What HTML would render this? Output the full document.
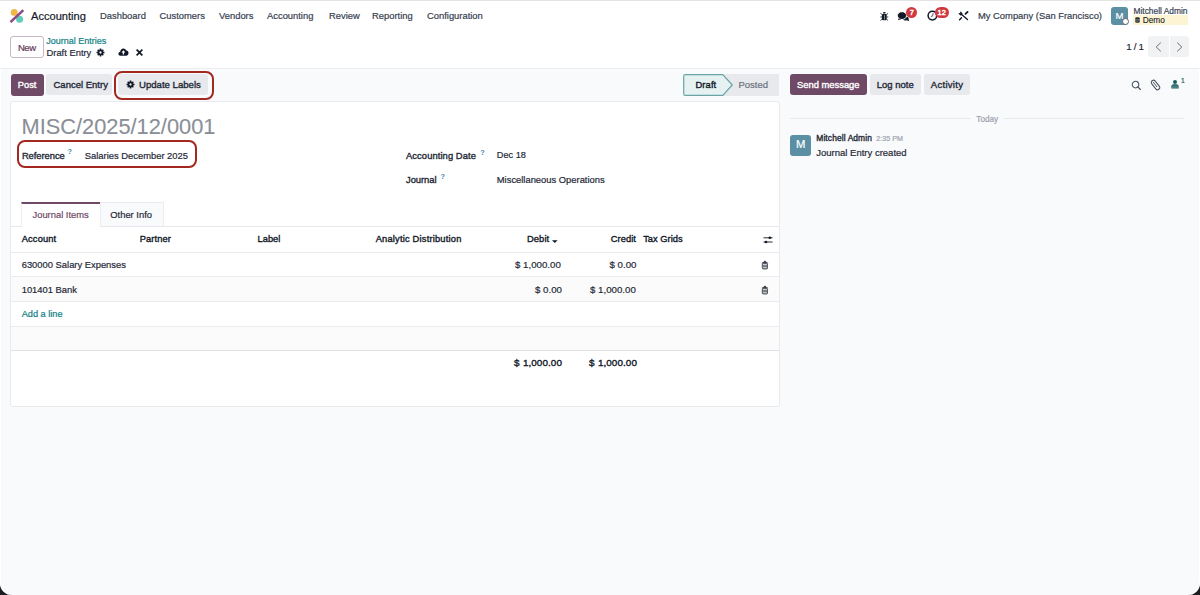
<!DOCTYPE html>
<html><head><meta charset="utf-8">
<style>
*{box-sizing:border-box;margin:0;padding:0}
html,body{width:1200px;height:595px;overflow:hidden;background:#1b1d21}
body{font-family:"Liberation Sans",sans-serif;color:#374151;position:relative}
#win{position:absolute;left:0;top:0;width:1200px;height:595px;background:#f9fafb;border-radius:0 0 12px 12px;overflow:hidden;box-shadow:inset 1px 0 0 #fff,inset -1px 0 0 #fff}
.a{position:absolute}
.t{position:absolute;white-space:nowrap;line-height:1;-webkit-text-stroke:0.2px currentColor}
.b{font-weight:bold;-webkit-text-stroke:0}
.sb{-webkit-text-stroke:0.36px currentColor}
#topstrip{left:0;top:0;width:1200px;height:1px;background:#e3e3e3}
#nav{left:0;top:1px;width:1200px;height:31px;background:#fff}
#cp{left:0;top:32px;width:1200px;height:37px;background:#fff;border-bottom:1px solid #eceef1}
.nav{font-size:9.4px;color:#374151}
.btn{position:absolute;border-radius:3px;background:#e7e9ed}
.sheet{position:absolute;left:10px;top:101px;width:770px;height:306px;background:#fff;border:1px solid #e8eaed;border-radius:3px}
.hline{position:absolute;height:1px;background:#e9ebee}
.redbox{position:absolute;border:2px solid #a3281f;border-radius:8px}
</style></head>
<body>
<div id="win">
<div class="a" id="topstrip"></div>
<div class="a" id="nav"></div>
<div class="a" id="cp"></div>

<!-- logo -->
<svg class="a" style="left:9px;top:8px" width="16" height="16" viewBox="0 0 16 16">
  <circle cx="5.2" cy="4.4" r="3.45" fill="#f0b849"/>
  <circle cx="10.6" cy="11.3" r="3.5" fill="#5ecdb9"/>
  <line x1="1.5" y1="14.1" x2="14.3" y2="2.1" stroke="#8d4b82" stroke-width="2.6" stroke-linecap="butt"/>
</svg>
<span class="t" style="left:31px;top:11px;font-size:11.1px;color:#111827">Accounting</span>
<span class="t nav" style="left:100px;top:11px">Dashboard</span>
<span class="t nav" style="left:159.5px;top:11px">Customers</span>
<span class="t nav" style="left:219px;top:11px">Vendors</span>
<span class="t nav" style="left:267px;top:11px">Accounting</span>
<span class="t nav" style="left:329px;top:11px">Review</span>
<span class="t nav" style="left:372px;top:11px">Reporting</span>
<span class="t nav" style="left:427px;top:11px">Configuration</span>

<!-- systray -->
<span class="t nav" style="left:978px;top:11px">My Company (San Francisco)</span>
<div class="a" style="left:1111px;top:7px;width:17.2px;height:17.5px;border-radius:3px;background:#5b8fa3"></div>
<span class="t" style="left:1115.5px;top:11.3px;font-size:9.6px;color:#fff">M</span>
<div class="a" style="left:1121.5px;top:17.6px;width:7.2px;height:7.2px;border-radius:50%;background:#fff;border:1.2px solid #5f6672"></div>
<span class="t" style="left:1133.5px;top:7px;font-size:8.4px;color:#374151">Mitchell Admin</span>
<div class="a" style="left:1133px;top:15px;width:55px;height:10px;background:#fdf4d3"></div>
<span class="t" style="left:1142.7px;top:16.2px;font-size:8.3px;color:#111827;-webkit-text-stroke:0.1px #111827">Demo</span>
<svg class="a" style="left:1134.8px;top:16.8px" width="5" height="6" viewBox="0 0 5 6"><path d="M0.2 1 C0.2 0 4.8 0 4.8 1 V5 C4.8 6 0.2 6 0.2 5 Z" fill="#2b2f36"/><path d="M0.2 2.2 C1.5 2.8 3.5 2.8 4.8 2.2 M0.2 3.6 C1.5 4.2 3.5 4.2 4.8 3.6" stroke="#fdf4d3" stroke-width="0.35" fill="none"/></svg>

<!-- breadcrumbs -->
<div class="a" style="left:10px;top:36px;width:34px;height:22px;border:1px solid #c9b6c4;border-radius:3px;background:#fff"></div>
<span class="t" style="left:18px;top:43.1px;font-size:9.5px;letter-spacing:-0.5px;color:#5f3b57">New</span>
<span class="t" style="left:46.3px;top:37.4px;font-size:9px;color:#0f7e83">Journal Entries</span>
<span class="t" style="left:46.5px;top:47.8px;font-size:9.4px;color:#1f2937">Draft Entry</span>

<!-- pager -->
<span class="t" style="left:1126.3px;top:41.8px;font-size:9.8px;color:#1f2937">1</span><span class="t" style="left:1133.7px;top:41.8px;font-size:9.8px;color:#1f2937">/</span><span class="t" style="left:1138.5px;top:41.8px;font-size:9.8px;color:#1f2937">1</span>
<div class="btn" style="left:1148px;top:36px;width:41px;height:21px;background:#f1f2f4"></div>
<div class="a" style="left:1168.5px;top:36px;width:1px;height:21px;background:#fff"></div>

<!-- buttons -->
<div class="btn" style="left:11px;top:74px;width:32.5px;height:21.5px;background:#6f4a66"></div>
<span class="t sb" style="left:17.8px;top:81px;font-size:9.3px;color:#fff">Post</span>
<div class="btn" style="left:46px;top:74px;width:66px;height:21px"></div>
<span class="t sb" style="left:53.5px;top:80px;font-size:9.5px;color:#1f2937">Cancel Entry</span>
<div class="btn" style="left:117.5px;top:74px;width:90.5px;height:21px"></div>
<span class="t sb" style="left:139px;top:80px;font-size:9.6px;color:#1f2937">Update Labels</span>
<div class="redbox" style="left:114px;top:70.5px;width:100px;height:29.5px"></div>

<!-- statusbar -->
<div class="a" style="left:723px;top:74px;width:55.8px;height:21.5px;background:#e7e9ed"></div>
<svg class="a" style="left:683.3px;top:74px" width="51" height="22" viewBox="0 0 51 22">
  <path d="M2.3 0.7 H39.8 L49.3 11 L39.8 21.3 H2.3 Q0.7 21.3 0.7 19.7 V2.3 Q0.7 0.7 2.3 0.7 Z" fill="#e6f1f2" stroke="#68a5a7" stroke-width="1.2" stroke-linejoin="miter"/>
</svg>
<span class="t sb" style="left:695.5px;top:79.8px;font-size:9.4px;letter-spacing:0.1px;color:#111827">Draft</span>
<span class="t" style="left:738.5px;top:80px;font-size:9.5px;color:#6b7280">Posted</span>

<!-- chatter buttons -->
<div class="btn" style="left:790px;top:74px;width:76.5px;height:20.7px;background:#6f4a66"></div>
<span class="t sb" style="left:797px;top:80px;font-size:9.4px;color:#fff">Send message</span>
<div class="btn" style="left:870px;top:74px;width:51px;height:20.7px"></div>
<span class="t sb" style="left:876.7px;top:80px;font-size:9.5px;color:#1f2937">Log note</span>
<div class="btn" style="left:924px;top:74px;width:46px;height:20.7px"></div>
<span class="t sb" style="left:930.8px;top:80px;font-size:9.6px;letter-spacing:0.25px;color:#1f2937">Activity</span>

<!-- sheet -->
<div class="sheet"></div>
<span class="t" style="left:21.5px;top:116.3px;font-size:21.8px;color:#8a8e96;-webkit-text-stroke:0.1px #8a8e96">MISC/2025/12/0001</span>
<span class="t sb" style="left:21.9px;top:150.6px;font-size:9.4px;letter-spacing:-0.05px;color:#1f2937">Reference</span>
<span class="t" style="left:84.8px;top:150.8px;font-size:9.4px;color:#1f2937">Salaries December 2025</span>
<div class="redbox" style="left:16.5px;top:140px;width:180px;height:28px"></div>

<span class="t sb" style="left:406px;top:150.5px;font-size:9.4px;letter-spacing:0.08px;color:#1f2937">Accounting Date</span>
<span class="t" style="left:496.8px;top:151px;font-size:9.2px;color:#1f2937">Dec 18</span>
<span class="t sb" style="left:406px;top:174.8px;font-size:9.4px;letter-spacing:-0.03px;color:#1f2937">Journal</span>
<span class="t" style="left:496.8px;top:174.6px;font-size:9.4px;color:#1f2937">Miscellaneous Operations</span>

<!-- tabs -->
<div class="hline" style="left:11px;top:226px;width:768px;background:#e6e8eb"></div>
<div class="a" style="left:100px;top:202px;width:63.5px;height:24px;background:#f9fafb;border:1px solid #eaecef;border-bottom:none"></div>
<div class="a" style="left:21px;top:202px;width:79px;height:25px;background:#fff;border-left:1px solid #eceef1;border-top:2px solid #6f4a66"></div>
<span class="t" style="left:32.5px;top:209.8px;font-size:9.4px;color:#6f4a66">Journal Items</span>
<span class="t" style="left:110.3px;top:209.8px;font-size:9.4px;color:#1f2937">Other Info</span>

<!-- table -->
<div class="hline" style="left:11px;top:252px;width:768px"></div>
<div class="a" style="left:11px;top:277px;width:768px;height:24px;background:#fbfbfb"></div>
<div class="hline" style="left:11px;top:276px;width:768px"></div>
<div class="hline" style="left:11px;top:301px;width:768px"></div>
<div class="a" style="left:11px;top:326px;width:768px;height:24px;background:#fbfbfb"></div>
<div class="hline" style="left:11px;top:326px;width:768px"></div>
<div class="hline" style="left:11px;top:350px;width:768px;height:1px;background:#dfe2e5"></div>

<span class="t sb" style="left:21.7px;top:235.4px;font-size:9.3px;letter-spacing:0.15px;color:#111827">Account</span>
<span class="t sb" style="left:139.7px;top:235.4px;font-size:9.3px;letter-spacing:0.12px;color:#111827">Partner</span>
<span class="t sb" style="left:257.5px;top:235.4px;font-size:9.3px;letter-spacing:0.03px;color:#111827">Label</span>
<span class="t sb" style="left:375.7px;top:235.4px;font-size:9.3px;letter-spacing:0.2px;color:#111827">Analytic Distribution</span>
<span class="t sb" style="left:527px;top:235.4px;font-size:9.3px;letter-spacing:0.12px;color:#111827">Debit</span>
<span class="t sb" style="left:610.7px;top:235.4px;font-size:9.3px;letter-spacing:0.08px;color:#111827">Credit</span>
<span class="t sb" style="left:643.2px;top:235.4px;font-size:9.3px;letter-spacing:0.02px;color:#111827">Tax Grids</span>

<span class="t" style="left:21.7px;top:260.3px;font-size:9.4px;color:#1f2937">630000 Salary Expenses</span>
<span class="t" style="left:21.7px;top:284.8px;font-size:9.4px;color:#1f2937">101401 Bank</span>
<span class="t" style="left:21.7px;top:310px;font-size:9.2px;color:#0f7e83">Add a line</span>
<span class="t" style="left:515px;top:260.3px;font-size:9.7px;color:#1f2937">$ 1,000.00</span>
<span class="t" style="left:609.5px;top:260.3px;font-size:9.7px;color:#1f2937">$ 0.00</span>
<span class="t" style="left:535px;top:284.8px;font-size:9.7px;color:#1f2937">$ 0.00</span>
<span class="t" style="left:590px;top:284.8px;font-size:9.7px;color:#1f2937">$ 1,000.00</span>
<span class="t sb" style="left:513.9px;top:358.4px;font-size:9.9px;word-spacing:0.6px;letter-spacing:0.08px;color:#111827">$ 1,000.00</span>
<span class="t sb" style="left:588.9px;top:358.4px;font-size:9.9px;word-spacing:0.6px;letter-spacing:0.08px;color:#111827">$ 1,000.00</span>

<!-- chatter -->
<div class="hline" style="left:790px;top:118px;width:181px;background:#e8eaed"></div>
<div class="hline" style="left:1004px;top:118px;width:180px;background:#e8eaed"></div>
<span class="t" style="left:976.3px;top:116px;font-size:8.2px;color:#9ca3af">Today</span>
<div class="a" style="left:790px;top:134.7px;width:21px;height:21px;border-radius:3px;background:#5b8fa3"></div>
<span class="t" style="left:796px;top:139.2px;font-size:11.3px;color:#fff">M</span>
<span class="t sb" style="left:816.3px;top:134.2px;font-size:8.4px;letter-spacing:0.12px;color:#1f2937">Mitchell Admin</span>
<span class="t" style="left:876.3px;top:135.2px;font-size:7.2px;color:#9ca3af">2:35 PM</span>
<span class="t" style="left:816.3px;top:148px;font-size:9.5px;color:#1f2937">Journal Entry created</span>

<!-- ICONS -->
<!-- bug -->
<svg class="a" style="left:879.5px;top:11.5px" width="9" height="9" viewBox="0 0 9 9">
  <ellipse cx="4.3" cy="0.85" rx="1.4" ry="0.75" fill="#111827"/>
  <rect x="1.9" y="1.8" width="4.8" height="6.5" rx="1.6" fill="#111827"/>
  <rect x="4.0" y="3.0" width="0.6" height="4.6" fill="#c9ccd2"/>
  <g stroke="#111827" stroke-width="0.85">
    <line x1="2.3" y1="2.6" x2="0.5" y2="1.4"/><line x1="2" y1="5" x2="0.3" y2="5"/><line x1="2.3" y1="7.2" x2="0.5" y2="8.4"/>
    <line x1="6.3" y1="2.6" x2="8.1" y2="1.4"/><line x1="6.6" y1="5" x2="8.3" y2="5"/><line x1="6.3" y1="7.2" x2="8.1" y2="8.4"/>
  </g>
</svg>
<!-- chat -->
<svg class="a" style="left:897px;top:10.5px" width="13" height="11" viewBox="0 0 13 11">
  <path d="M8.4 5.4 C11 5.2 12.2 6.8 11.6 8.2 L12.2 10.2 L9.8 9.3 C8.2 9.9 6.4 9.3 5.8 8.3 Z" fill="#111827"/>
  <ellipse cx="5" cy="4.6" rx="4.6" ry="3.9" fill="#111827" stroke="#fff" stroke-width="0.9"/>
  <path d="M1.8 7.3 L0.9 9.3 L4 8.2 Z" fill="#111827"/>
</svg>
<div class="a" style="left:906px;top:6.8px;width:11.2px;height:11.2px;border-radius:50%;background:#d1393f"></div>
<span class="t" style="left:909.7px;top:9.3px;font-size:7.4px;color:#fff;-webkit-text-stroke:0.45px #fff">7</span>
<!-- clock -->
<svg class="a" style="left:927px;top:10px" width="11" height="11" viewBox="0 0 11 11">
  <circle cx="5.4" cy="5.6" r="4.3" fill="none" stroke="#111827" stroke-width="1.5"/>
  <path d="M6.1 3.4 C6.1 4.8 5.4 5.9 4.4 6.5" fill="none" stroke="#6b7280" stroke-width="1.1" stroke-linecap="round"/>
</svg>
<div class="a" style="left:934.5px;top:6.9px;width:14.8px;height:11.1px;border-radius:5.6px;background:#d1393f"></div>
<span class="t" style="left:937.6px;top:9.1px;font-size:7.4px;color:#fff;-webkit-text-stroke:0.45px #fff">12</span>
<!-- tools -->
<svg class="a" style="left:955px;top:8px" width="17" height="15" viewBox="0 0 17 15">
  <path d="M5.6 3.4 L7.5 5.3 L7.2 7.1 L5.3 7.5 L3.4 5.6 L4.3 5.0 L5.4 5.4 L5.0 4.3 Z" fill="#111827"/>
  <path d="M6.6 6.6 L12.5 11.6" stroke="#111827" stroke-width="1.35" stroke-linecap="round"/>
  <path d="M12.6 3.9 L10.5 5.9" stroke="#111827" stroke-width="1.8" stroke-linecap="round"/>
  <path d="M6.5 9.7 L4.6 11.8" stroke="#111827" stroke-width="1.4" stroke-linecap="round"/>
</svg>

<!-- breadcrumb gear -->
<svg class="a" style="left:96px;top:47.6px" width="9" height="9" viewBox="0 0 9 9"><path fill-rule="evenodd" fill="#111827" d="M3.76 1.54 L3.71 0.53 L5.29 0.53 L5.24 1.54 L6.07 1.89 L6.75 1.13 L7.87 2.25 L7.11 2.93 L7.46 3.76 L8.47 3.71 L8.47 5.29 L7.46 5.24 L7.11 6.07 L7.87 6.75 L6.75 7.87 L6.07 7.11 L5.24 7.46 L5.29 8.47 L3.71 8.47 L3.76 7.46 L2.93 7.11 L2.25 7.87 L1.13 6.75 L1.89 6.07 L1.54 5.24 L0.53 5.29 L0.53 3.71 L1.54 3.76 L1.89 2.93 L1.13 2.25 L2.25 1.13 L2.93 1.89 Z M4.5 3.35 A1.15 1.15 0 1 0 4.5 5.65 A1.15 1.15 0 1 0 4.5 3.35 Z"/></svg>
<!-- cloud upload -->
<svg class="a" style="left:117.5px;top:47.8px" width="11" height="8" viewBox="0 0 11 8">
  <path d="M2.4 7.7 C0.9 7.7 0.3 6.6 0.4 5.6 C0.5 4.6 1.3 4 2.1 4 C2.2 2 3.6 0.4 5.4 0.4 C6.9 0.4 7.9 1.4 8.3 2.6 C9.6 2.7 10.6 3.8 10.5 5.2 C10.4 6.6 9.4 7.7 8.2 7.7 Z" fill="#111827"/>
  <path d="M5.4 2.3 L3.4 4.5 H4.75 V6.5 H6.05 V4.5 H7.4 Z" fill="#fff"/>
</svg>
<!-- X -->
<svg class="a" style="left:136.1px;top:49.1px" width="7" height="7" viewBox="0 0 7 7">
  <path d="M1.2 1.2 L5.8 5.8 M5.8 1.2 L1.2 5.8" stroke="#111827" stroke-width="1.7" stroke-linecap="square"/>
</svg>
<!-- pager chevrons -->
<svg class="a" style="left:1155px;top:41.5px" width="7" height="10" viewBox="0 0 7 10">
  <path d="M5.8 0.6 L1.2 5 L5.8 9.4" fill="none" stroke="#6b7078" stroke-width="1"/>
</svg>
<svg class="a" style="left:1176px;top:41.5px" width="7" height="10" viewBox="0 0 7 10">
  <path d="M1.2 0.6 L5.8 5 L1.2 9.4" fill="none" stroke="#6b7078" stroke-width="1"/>
</svg>
<!-- update labels gear -->
<svg class="a" style="left:125.7px;top:80.4px" width="9" height="9" viewBox="0 0 9 9"><path fill-rule="evenodd" fill="#111827" d="M3.76 1.54 L3.71 0.53 L5.29 0.53 L5.24 1.54 L6.07 1.89 L6.75 1.13 L7.87 2.25 L7.11 2.93 L7.46 3.76 L8.47 3.71 L8.47 5.29 L7.46 5.24 L7.11 6.07 L7.87 6.75 L6.75 7.87 L6.07 7.11 L5.24 7.46 L5.29 8.47 L3.71 8.47 L3.76 7.46 L2.93 7.11 L2.25 7.87 L1.13 6.75 L1.89 6.07 L1.54 5.24 L0.53 5.29 L0.53 3.71 L1.54 3.76 L1.89 2.93 L1.13 2.25 L2.25 1.13 L2.93 1.89 Z M4.5 3.35 A1.15 1.15 0 1 0 4.5 5.65 A1.15 1.15 0 1 0 4.5 3.35 Z"/></svg>

<!-- chatter icons -->
<svg class="a" style="left:1131px;top:79.5px" width="11" height="11" viewBox="0 0 11 11">
  <circle cx="4.5" cy="4.6" r="3.3" fill="none" stroke="#4b5563" stroke-width="1.05"/>
  <path d="M6.9 7 L9.4 9.5" stroke="#4b5563" stroke-width="1.15" stroke-linecap="round"/>
</svg>
<svg class="a" style="left:1150px;top:78.5px" width="11" height="12" viewBox="0 0 11 12">
  <g transform="rotate(-38 5.5 6)">
    <rect x="3.3" y="0.6" width="4.4" height="10.8" rx="2.2" fill="none" stroke="#4b5563" stroke-width="1.05"/>
    <path d="M5.5 2.6 V8.2" stroke="#4b5563" stroke-width="0.9" stroke-linecap="round"/>
  </g>
</svg>
<svg class="a" style="left:1170.5px;top:80px" width="8" height="9" viewBox="0 0 8 9">
  <circle cx="4" cy="2.1" r="2" fill="#1b5e5f"/>
  <path d="M0.4 8.5 V6.3 C0.4 5 1.4 4.3 2.6 4.3 H5.4 C6.6 4.3 7.6 5 7.6 6.3 V8.5 Z" fill="#1b5e5f"/>
  <path d="M1 6.1 H7 M1 7.3 H7" stroke="#f9fafb" stroke-width="0.35" opacity="0.8"/>
</svg>
<span class="t" style="left:1181px;top:78.2px;font-size:6.6px;color:#1b5e5f">1</span>

<!-- table icons -->
<svg class="a" style="left:762.5px;top:235px" width="10" height="9" viewBox="0 0 10 9">
  <path d="M0.5 2.8 H9.6 M0.5 7 H9.6" stroke="#111827" stroke-width="0.9"/>
  <circle cx="6.8" cy="2.8" r="1.3" fill="#111827"/><circle cx="3" cy="7" r="1.3" fill="#111827"/>
</svg>
<svg class="a" style="left:552.4px;top:239.8px" width="6" height="4" viewBox="0 0 6 4"><path d="M0 0.2 H5.6 L2.8 3.1 Z" fill="#111827"/></svg>
<svg class="a" style="left:761px;top:259.6px" width="8" height="10" viewBox="0 0 8 10">
  <path d="M0.5 3.3 C0.5 2.5 1.6 2.1 2.6 1.9 C2.9 1.0 3.3 0.8 3.9 0.8 C4.5 0.8 4.9 1.0 5.2 1.9 C6.2 2.1 7.3 2.5 7.3 3.3 Z" fill="#3f444c"/>
  <rect x="1.3" y="3.3" width="5.2" height="5.7" rx="0.9" fill="#7a7e85" stroke="#3f444c" stroke-width="0.8"/>
  <rect x="2.1" y="4.1" width="3.6" height="0.75" fill="#f2f2f2"/>
  <rect x="2.1" y="7.4" width="3.6" height="0.75" fill="#f2f2f2"/>
</svg>
<svg class="a" style="left:761px;top:284.7px" width="8" height="10" viewBox="0 0 8 10">
  <path d="M0.5 3.3 C0.5 2.5 1.6 2.1 2.6 1.9 C2.9 1.0 3.3 0.8 3.9 0.8 C4.5 0.8 4.9 1.0 5.2 1.9 C6.2 2.1 7.3 2.5 7.3 3.3 Z" fill="#3f444c"/>
  <rect x="1.3" y="3.3" width="5.2" height="5.7" rx="0.9" fill="#7a7e85" stroke="#3f444c" stroke-width="0.8"/>
  <rect x="2.1" y="4.1" width="3.6" height="0.75" fill="#f2f2f2"/>
  <rect x="2.1" y="7.4" width="3.6" height="0.75" fill="#f2f2f2"/>
</svg>

<!-- help marks -->
<span class="t b" style="left:67.6px;top:148.3px;font-size:7.3px;color:#3d8bb5">?</span>
<span class="t b" style="left:480.2px;top:149px;font-size:7.3px;color:#3d8bb5">?</span>
<span class="t b" style="left:440.4px;top:172.8px;font-size:7.3px;color:#3d8bb5">?</span>

</div>
</body></html>
